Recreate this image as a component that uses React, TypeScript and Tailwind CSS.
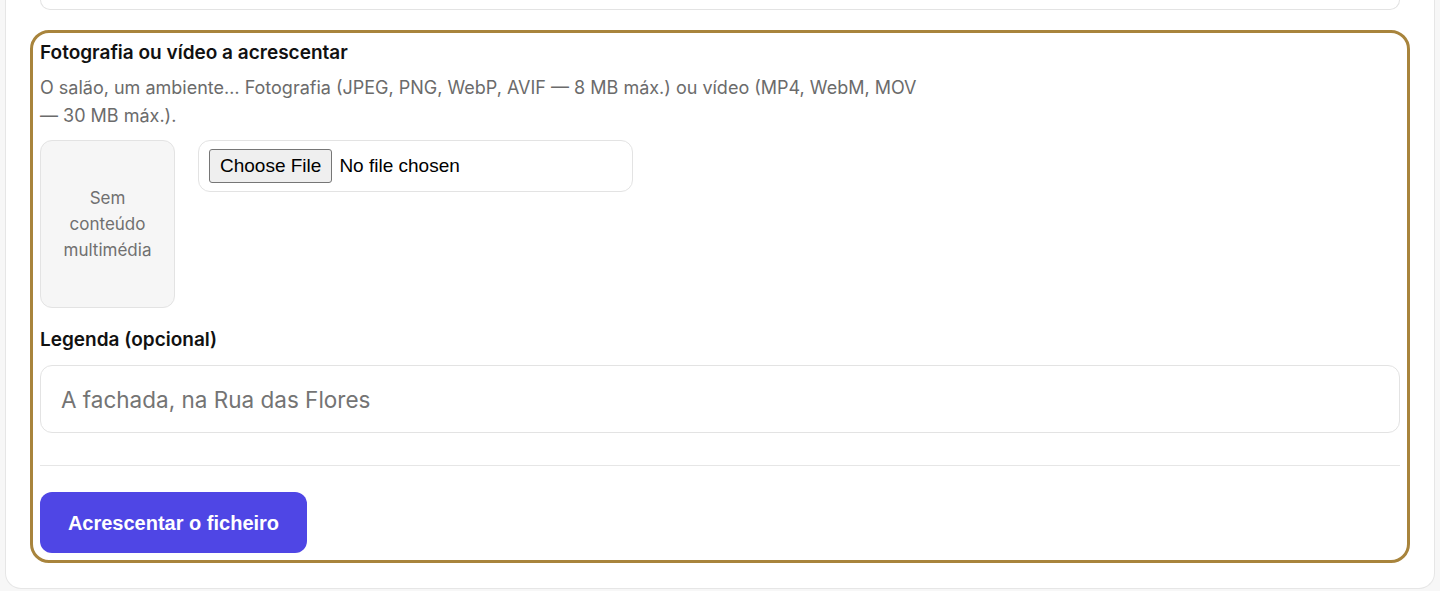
import React from 'react';

const App = () => {
  return (
    <div className="min-h-[591px] bg-[#f7f7f7] font-['Inter','Liberation_Sans',sans-serif]">
      <div className="mx-[5px] rounded-b-2xl border border-t-0 border-[#e6e6e6] bg-white px-[34px] pb-[35px]">
        {/* bottom of the previous card */}
        <div className="h-[10px] rounded-b-xl border border-t-0 border-[#e3e3e3] bg-white" />

        {/* Media upload block (focused) */}
        <section className="mt-[30px] rounded-[9px] outline-[3px] outline-offset-[7px] outline-[#a8843c] outline-solid">
          <h3 className="pt-[1px] text-[19px] leading-[24px] font-semibold text-[#111]">
            Fotografia ou vídeo a acrescentar
          </h3>
          <p className="mt-[9px] max-w-[890px] text-[18px] leading-[28px] text-[#6b6b6b]">
            O salão, um ambiente… Fotografia (JPEG, PNG, WebP, AVIF — 8 MB máx.) ou vídeo (MP4, WebM, MOV — 30 MB máx.).
          </p>

          <div className="mt-[10px] flex items-start gap-[23px]">
            <div className="flex h-[168px] w-[135px] items-center justify-center rounded-xl border border-[#e3e3e3] bg-[#f6f6f6] px-4 text-center text-[17px] leading-[26px] text-[#707070]">
              Sem conteúdo multimédia
            </div>
            <div className="flex h-[52px] w-[435px] items-center rounded-xl border border-[#e3e3e3] bg-white px-[10px]">
              <input
                type="file"
                accept="image/*,video/*"
                className="font-['Liberation_Sans',Arial,sans-serif] text-[19px] text-black file:mr-[7px] file:rounded-[3px] file:border file:border-solid file:border-[#767676] file:bg-[#efefef] file:px-[10px] file:py-[2px] file:text-black"
              />
            </div>
          </div>

          <label className="mt-[20px] block text-[19px] leading-[24px] font-semibold text-[#111]">
            Legenda (opcional)
          </label>
          <input
            type="text"
            placeholder="A fachada, na Rua das Flores"
            className="mt-[13px] block h-[68px] w-full rounded-xl border border-[#e3e3e3] bg-white px-[20px] text-[22.5px] text-[#111] placeholder:text-[#747474] focus:outline-none"
          />

          <hr className="mt-[32px] border-t border-[#e6e6e6]" />

          <button
            type="button"
            className="mt-[26px] h-[61px] w-[267px] rounded-xl bg-[#4f46e5] font-['Liberation_Sans',Arial,sans-serif] text-[20px] font-bold text-white"
          >
            Acrescentar o ficheiro
          </button>
        </section>
      </div>
    </div>
  );
};

export default App;
